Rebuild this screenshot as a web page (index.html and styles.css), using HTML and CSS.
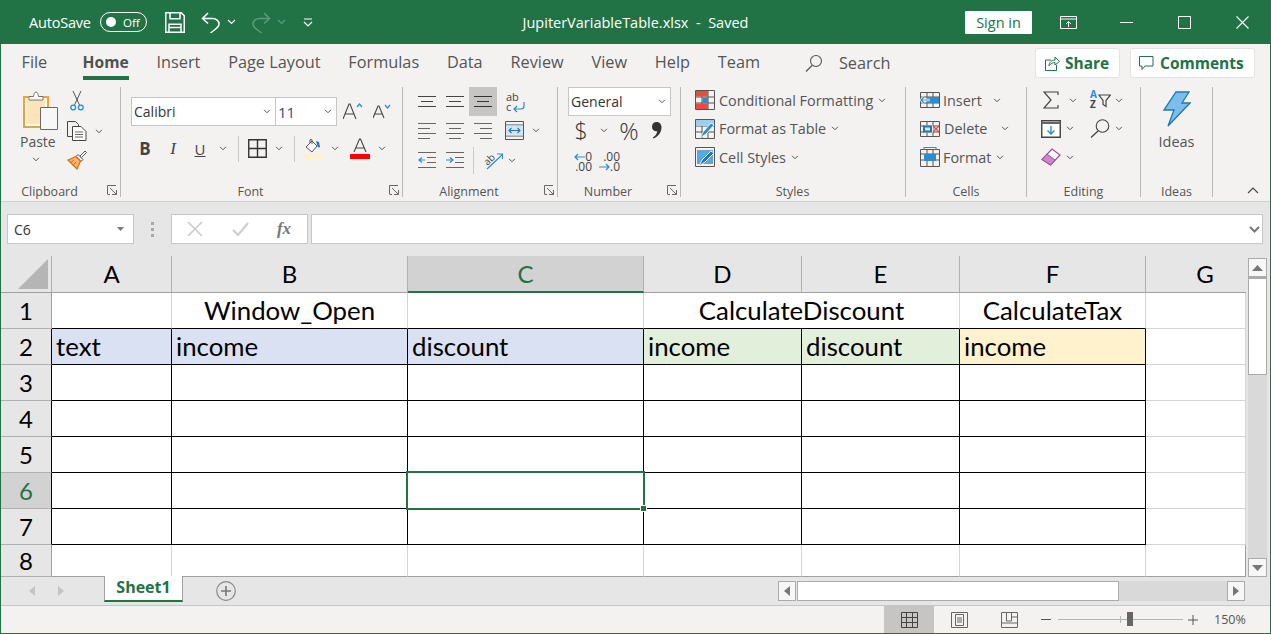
FILE: index.html
```html
<!DOCTYPE html>
<html lang="en">
<head>
<meta charset="utf-8">
<title>JupiterVariableTable.xlsx - Saved</title>
<link rel="stylesheet" href="styles.css">
</head>
<body>
<svg class="defs" width="0" height="0">
  <symbol id="chev" viewBox="0 0 9 6"><path d="M1 1l3.500 3.500L8 1" fill="none" stroke="currentColor" stroke-width="1.200"/></symbol>
  <symbol id="launch" viewBox="0 0 10 10"><path d="M.5 9V.5H9M3 3l6 6M9.500 5v4.500H5M.5 9.500H3" fill="none" stroke="#666" stroke-width="1"/></symbol>
</svg>
<div class="window">
  <header class="titlebar">
    <div class="qat">
      <span class="autosave">AutoSave</span>
      <span class="toggle"><i class="knob"></i><span>Off</span></span>
      <svg class="q-save" width="20" height="21" viewBox="0 0 20 21"><path d="M.75.75h15.500l3 3v16.500H.75zM5 .75v6h10v-6M4 20.250v-8h12v8M4 15.500h12" fill="none" stroke="#fff" stroke-width="1.500"/></svg>
      <svg class="q-undo" width="20" height="21" viewBox="0 0 20 21"><path d="M7 1L1.500 6.500 7 11.500M2 6.500h9.500c3.800 0 6.500 2.500 6.500 5.500 0 2.500-2 4-4 5.500L9.500 21" fill="none" stroke="#fff" stroke-width="1.500"/></svg>
      <svg class="q-chev" width="9" height="6"><use href="#chev"/></svg>
      <svg class="q-redo" width="20" height="21" viewBox="0 0 20 21"><path d="M13 1l5.500 5.500L13 11.500M18 6.500H8.500C4.700 6.500 2 9 2 12c0 2.500 2 4 4 5.500l4.500 3.500" fill="none" stroke="#5e9b7e" stroke-width="1.500"/></svg>
      <svg class="q-chev dim" width="9" height="6"><use href="#chev"/></svg>
      <svg class="q-custom" width="10" height="9" viewBox="0 0 10 9"><path d="M1 1h8M1 4l4 4 4-4" fill="none" stroke="#fff" stroke-width="1.200"/></svg>
    </div>
    <div class="doc-title">JupiterVariableTable.xlsx&nbsp; -&nbsp; Saved</div>
    <div class="win-right">
      <span class="signin">Sign in</span>
      <span class="wc"><svg width="17" height="13" viewBox="0 0 17 13"><path d="M.5.500h16v12H.5zM.5 3h16M8.500 11V5.500M6 8l2.500-2.500L11 8" fill="none" stroke="#fff"/></svg></span>
      <span class="wc"><svg width="13" height="1" viewBox="0 0 13 1"><path d="M0 .5h13" stroke="#fff"/></svg></span>
      <span class="wc"><svg width="13" height="13" viewBox="0 0 13 13"><path d="M.5.500h12v12H.5z" fill="none" stroke="#fff"/></svg></span>
      <span class="wc"><svg width="13" height="13" viewBox="0 0 13 13"><path d="M.5.500l12 12M12.500.5l-12 12" fill="none" stroke="#fff" stroke-width="1.100"/></svg></span>
    </div>
  </header>

  <nav class="tabs">
    <span class="tab file">File</span>
    <span class="tab active">Home</span>
    <span class="tab">Insert</span>
    <span class="tab">Page Layout</span>
    <span class="tab">Formulas</span>
    <span class="tab">Data</span>
    <span class="tab">Review</span>
    <span class="tab">View</span>
    <span class="tab">Help</span>
    <span class="tab">Team</span>
    <span class="search">
      <svg width="18" height="18" viewBox="0 0 18 18"><circle cx="11" cy="7" r="5.500" fill="none" stroke="#555" stroke-width="1.100"/><path d="M7 11.500L1 17.500" stroke="#555" stroke-width="1.300"/></svg>
      <span>Search</span>
    </span>
    <span class="tab-actions">
      <span class="pill share">
        <svg width="15" height="16" viewBox="0 0 15 16"><path d="M6 5H.5v10.500h11V10M4 11c0-4 3-6 6-6V2l4.500 4.500L10 10V7.500C8 7.500 5.500 8.500 4 11z" fill="none" stroke="#217346"/></svg>
        <span>Share</span>
      </span>
      <span class="pill comments">
        <svg width="15" height="15" viewBox="0 0 15 15"><path d="M.5.500h13.500v9.500H6L3 13.500V10H.5z" fill="none" stroke="#217346"/></svg>
        <span>Comments</span>
      </span>
    </span>
  </nav>

  <section class="ribbon">
    <div class="group g-clip launcher-pad">
      <div class="gbody clip-body">
        <div class="paste">
          <svg width="35" height="39" viewBox="0 0 35 39"><path d="M1 6h24v30H1z" fill="#fff" stroke="#eca33e" stroke-width="2"/><path d="M3.500 8h19v25h-19z" fill="#fce4b8"/><path d="M6 9V5.500h4.500C11 3 11.500 1 13 1s2 2 2.500 4.500H20V9z" fill="#fff" stroke="#777"/><path d="M17.500 16.500h17v22h-17z" fill="#f7f7f7" stroke="#6a6a6a"/></svg>
          <span class="paste-label">Paste</span>
          <svg class="ch" width="8" height="5"><use href="#chev"/></svg>
        </div>
        <div class="clip-tools">
          <div class="clip-row"><svg class="cut" width="14" height="20" viewBox="0 0 14 20"><path d="M3 0l6.500 14M11 0L4.500 14" fill="none" stroke="#555"/><circle cx="3.200" cy="16.500" r="2.400" fill="none" stroke="#2a8dd4" stroke-width="1.300"/><circle cx="10.800" cy="16.500" r="2.400" fill="none" stroke="#2a8dd4" stroke-width="1.300"/></svg></div>
          <div class="clip-row"><svg width="20" height="20" viewBox="0 0 20 20"><path d="M.5.500h8l3 3V5M.5.500v15H5" fill="none" stroke="#444"/><path d="M5.500 5.500h8.500l5 5v9H5.500z" fill="#fff" stroke="#444"/><path d="M8 11h8M8 13.500h8M8 16h8" stroke="#666"/></svg><svg class="ch copy-ch" width="8" height="5"><use href="#chev"/></svg></div>
          <div class="clip-row"><svg width="20" height="20" viewBox="0 0 20 20"><path d="M13 6l5-5 1.500 1.500-5 5z" fill="#fff" stroke="#555"/><path d="M11 4.500l5 5-2 2-5-5z" fill="#fff" stroke="#555"/><path d="M1 10l8-3.500 4.500 4.500L10 19z" fill="#f7b46c" stroke="#e06c14" stroke-width="1.300"/><path d="M4 12l3-2M6 15l3-3" stroke="#e06c14"/></svg></div>
        </div>
      </div>
      <div class="glabel">Clipboard</div>
      <svg class="launcher" width="10" height="10"><use href="#launch"/></svg>
    </div>

    <div class="group g-font launcher-pad">
      <div class="gbody">
        <div class="font-row1">
          <span class="select font-name"><span>Calibri</span><svg class="ch" width="8" height="5"><use href="#chev"/></svg></span>
          <span class="select font-size"><span>11</span><svg class="ch" width="8" height="5"><use href="#chev"/></svg></span>
          <svg width="20" height="17" viewBox="0 0 20 17"><path d="M0 16L6 1h1l6 15M2.500 11h8" fill="none" stroke="#444" stroke-width="1.100"/><path d="M14 4l2.500-3L19 4" fill="none" stroke="#2a8dd4" stroke-width="1.200"/></svg>
          <svg width="18" height="15" viewBox="0 0 18 15"><path d="M0 14L5 2h1l5 12M2 10h7" fill="none" stroke="#444" stroke-width="1.100"/><path d="M12 1l2.500 3L17 1" fill="none" stroke="#2a8dd4" stroke-width="1.200"/></svg>
        </div>
        <div class="font-row2">
          <span class="bold-b">B</span>
          <span class="italic-i">I</span>
          <span class="under-u">U</span>
          <svg class="ch" width="8" height="5"><use href="#chev"/></svg>
          <i class="vsep"></i>
          <svg width="19" height="19" viewBox="0 0 19 19"><path d="M.75.750h17.500v17.500H.75zM9.500 1v17M1 9.500h17" fill="none" stroke="#333" stroke-width="1.400"/></svg>
          <svg class="ch" width="8" height="5"><use href="#chev"/></svg>
          <i class="vsep"></i>
          <svg width="20" height="21" viewBox="0 0 20 21"><path d="M3 9l6-6 5 5-5 6z" fill="#fff" stroke="#555"/><path d="M7 5V2c0-1 2-1 2 0v4" fill="none" stroke="#555"/><path d="M13 3l3 1 1 5c-1 1-3 0-2.500-1z" fill="#1f78b4"/><path d="M0 16h20v5H0z" fill="#fff0cf"/></svg>
          <svg class="ch" width="8" height="5"><use href="#chev"/></svg>
          <svg width="20" height="21" viewBox="0 0 20 21"><path d="M4 14L9.500 1h1L16 14M6 10h8" fill="none" stroke="#444" stroke-width="1.100"/><path d="M0 16h20v5H0z" fill="#f00"/></svg>
          <svg class="ch" width="8" height="5"><use href="#chev"/></svg>
        </div>
      </div>
      <div class="glabel">Font</div>
      <svg class="launcher" width="10" height="10"><use href="#launch"/></svg>
    </div>

    <div class="group g-align launcher-pad">
      <div class="gbody">
        <div class="al-row r1">
          <svg width="18" height="12" viewBox="0 0 18 12"><path d="M0 .5h18M3 5.500h12M0 10.500h18" stroke="#444"/></svg>
          <svg width="18" height="12" viewBox="0 0 18 12"><path d="M0 .5h18M3 5.500h12M0 10.500h18" stroke="#444"/></svg>
          <span class="al-on"><svg width="18" height="12" viewBox="0 0 18 12"><path d="M0 .5h18M3 5.500h12M0 10.500h18" stroke="#333"/></svg></span>
          <svg class="wrap-ic" width="20" height="26" viewBox="0 0 20 26"><text x="1" y="12" class="svgt">ab</text><text x="1" y="22" class="svgt">c</text><path d="M19 13v4c0 2-1 3-3 3H9M12 17l-3 3 3 3" fill="none" stroke="#2a8dd4" stroke-width="1.200"/></svg>
        </div>
        <div class="al-row r2">
          <svg width="18" height="18" viewBox="0 0 18 18"><path d="M0 1.500h18M0 6.500h12M0 11.500h18M0 16.500h12" stroke="#666"/></svg>
          <svg width="18" height="18" viewBox="0 0 18 18"><path d="M0 1.500h18M3 6.500h12M0 11.500h18M3 16.500h12" stroke="#666"/></svg>
          <svg width="18" height="18" viewBox="0 0 18 18"><path d="M0 1.500h18M6 6.500h12M0 11.500h18M6 16.500h12" stroke="#666"/></svg>
          <svg width="19" height="19" viewBox="0 0 19 19"><path d="M.5.500h18v18H.5zM1 4h17M1 15h17" fill="none" stroke="#555"/><path d="M1 4.500h17v10H1z" fill="#cfe6f7"/><path d="M4 9.500h11M6.500 7L4 9.500 6.500 12M12.500 7l2.500 2.500-2.500 2.500" fill="none" stroke="#1f78b4" stroke-width="1.100"/></svg>
          <svg class="ch" width="8" height="5"><use href="#chev"/></svg>
        </div>
        <div class="al-row r3">
          <svg width="18" height="18" viewBox="0 0 18 18"><path d="M0 1.500h18M9 6.500h9M9 11.500h9M0 16.500h18" stroke="#666"/><path d="M7 9H1M4 6.500L1 9l3 2.500" fill="none" stroke="#2a8dd4" stroke-width="1.200"/></svg>
          <svg width="18" height="18" viewBox="0 0 18 18"><path d="M0 1.500h18M9 6.500h9M9 11.500h9M0 16.500h18" stroke="#666"/><path d="M0 9h6M4 6.500L7 9l-3 2.500" fill="none" stroke="#2a8dd4" stroke-width="1.200"/></svg>
          <i class="vsep tall"></i>
          <svg width="22" height="22" viewBox="0 0 22 22"><text x="2" y="14" class="svgs" transform="rotate(-45 8 10)">ab</text><path d="M6 20L21 6M16 5h5.500v5" fill="none" stroke="#2a8dd4" stroke-width="1.200"/></svg>
          <svg class="ch" width="8" height="5"><use href="#chev"/></svg>
        </div>
      </div>
      <div class="glabel">Alignment</div>
      <svg class="launcher" width="10" height="10"><use href="#launch"/></svg>
    </div>

    <div class="group g-num launcher-pad">
      <div class="gbody">
        <div class="num-select-row"><span class="select num-select"><span>General</span><svg class="ch" width="8" height="5"><use href="#chev"/></svg></span></div>
        <div class="num-row2">
          <span class="glyph-big">$</span>
          <svg class="ch" width="8" height="5"><use href="#chev"/></svg>
          <span class="glyph-big pct">%</span>
          <svg width="10" height="17" viewBox="0 0 10 17"><path d="M4.500 0C7.500 0 9.500 2.200 9.500 5.500c0 5-3.500 9-8 11l-.7-1c2.500-1.500 4-3.500 4.400-6.300C2.500 9.800 0 8 0 4.800 0 2 2 0 4.500 0z" fill="#333"/></svg>
        </div>
        <div class="num-row3">
          <span class="dec"><span class="dec1"><svg width="11" height="8" viewBox="0 0 11 8"><path d="M11 4H1M4 1L1 4l3 3" fill="none" stroke="#2a8dd4" stroke-width="1.200"/></svg>0</span><span>.00</span></span>
          <span class="dec"><span>.00</span><span class="dec1"><svg width="11" height="8" viewBox="0 0 11 8"><path d="M0 4h10M7 1l3 3-3 3" fill="none" stroke="#2a8dd4" stroke-width="1.200"/></svg>.0</span></span>
        </div>
      </div>
      <div class="glabel">Number</div>
      <svg class="launcher" width="10" height="10"><use href="#launch"/></svg>
    </div>

    <div class="group g-styles">
      <div class="gbody list-body">
        <div class="list-row"><svg width="20" height="20" viewBox="0 0 20 20"><path d="M.5.500h19v19H.5zM.5 7h19M.5 13h19M7 .5v19M13 .5v19" fill="none" stroke="#555"/><path d="M1 1h12v5.500H1zM1 13.500h12V19H1z" fill="#e84c3d"/><path d="M7.500 7.500H13V13H7.500z" fill="#2a8dd4"/></svg><span>Conditional Formatting</span><svg class="ch" width="8" height="5"><use href="#chev"/></svg></div>
        <div class="list-row"><svg width="20" height="20" viewBox="0 0 20 20"><path d="M.5.500h19v19H.5zM.5 7h19M.5 13h19M7 .5v19M13 .5v19" fill="none" stroke="#555"/><path d="M1 1h18v6H1z" fill="#9fcdee"/><path d="M5 19l3-6 8-9 3 2-8 9z" fill="#2a8dd4" stroke="#f3f2f1"/></svg><span>Format as Table</span><svg class="ch" width="8" height="5"><use href="#chev"/></svg></div>
        <div class="list-row"><svg width="20" height="20" viewBox="0 0 20 20"><path d="M.5.500h19v19H.5z" fill="none" stroke="#555"/><path d="M2 3h16v14H2z" fill="#5aa7e0"/><path d="M4 19l3-6 9-9 3 2-9 9z" fill="#1f78b4" stroke="#f3f2f1"/></svg><span>Cell Styles</span><svg class="ch" width="8" height="5"><use href="#chev"/></svg></div>
      </div>
      <div class="glabel">Styles</div>
    </div>

    <div class="group g-cells">
      <div class="gbody list-body">
        <div class="list-row"><svg width="20" height="20" viewBox="0 0 20 20"><path d="M.5 2.500h19v15H.5zM7 2.500v15M13 2.500v15M.5 7h19M.5 13h19" fill="none" stroke="#555"/><path d="M7 7h12v6H7z" fill="#2a8dd4"/><path d="M10 10H1M4 7l-3 3 3 3" fill="none" stroke="#fff" stroke-width="2.500"/><path d="M11 10H1M4 7l-3 3 3 3" fill="none" stroke="#2a8dd4" stroke-width="1.200"/></svg><span>Insert</span><svg class="ch ins" width="8" height="5"><use href="#chev"/></svg></div>
        <div class="list-row"><svg width="20" height="20" viewBox="0 0 20 20"><path d="M.5 2.500h19v15H.5zM7 2.500v15M13 2.500v15M.5 7h19M.5 13h19" fill="none" stroke="#555"/><path d="M4 6.500h9v7H4z" fill="#f3f2f1"/><path d="M4 7.500h7v5H4z" fill="#cfe6f7" stroke="#1f78b4" stroke-width="2"/><path d="M13 7l6 6M19 7l-6 6" stroke="#e84c3d" stroke-width="1.400"/></svg><span class="del">Delete</span><svg class="ch del-ch" width="8" height="5"><use href="#chev"/></svg></div>
        <div class="list-row"><svg width="20" height="20" viewBox="0 0 20 20"><path d="M.5 2.500h19v17H.5zM7 2.500v17M13 2.500v17M.5 7h19M.5 13h19" fill="none" stroke="#555"/><path d="M4 7h12v7H4z" fill="#2a8dd4"/><path d="M4 .5h12M4 0v3M16 0v3" fill="none" stroke="#2a8dd4"/></svg><span>Format</span><svg class="ch" width="8" height="5"><use href="#chev"/></svg></div>
      </div>
      <div class="glabel">Cells</div>
    </div>

    <div class="group g-edit">
      <div class="gbody list-body">
        <div class="ed-row e1">
          <svg width="16" height="18" viewBox="0 0 16 18"><path d="M15 4V1H1l7 8-7 8h14v-3" fill="none" stroke="#444" stroke-width="1.200"/></svg>
          <svg class="ch" width="8" height="5"><use href="#chev"/></svg>
          <svg width="21" height="26" viewBox="0 0 21 26"><text x="0" y="11" class="svgaz">A</text><text x="0" y="21" class="svgz">Z</text><path d="M9 8h11.500l-4.500 5.500v6l-3-2v-4z" fill="none" stroke="#444" stroke-width="1.200"/></svg>
          <svg class="ch" width="8" height="5"><use href="#chev"/></svg>
        </div>
        <div class="ed-row e2">
          <svg width="20" height="18" viewBox="0 0 20 18"><path d="M.75.750h18.500v16.500H.75z" fill="#fff" stroke="#444" stroke-width="1.400"/><path d="M1 2h18v2H1z" fill="#666"/><path d="M10 6v8M6.500 10.500L10 14l3.500-3.500" fill="none" stroke="#2a8dd4" stroke-width="1.400"/></svg>
          <svg class="ch" width="8" height="5"><use href="#chev"/></svg>
          <svg class="srch" width="20" height="19" viewBox="0 0 20 19"><circle cx="12.500" cy="7" r="6.300" fill="none" stroke="#444" stroke-width="1.100"/><path d="M8 12L1 18.500" stroke="#444" stroke-width="1.300"/></svg>
          <svg class="ch" width="8" height="5"><use href="#chev"/></svg>
        </div>
        <div class="ed-row e3">
          <svg width="20" height="18" viewBox="0 0 20 18"><path d="M1 11.500L11 1l8 6-9.500 10z" fill="#fff" stroke="#a349a4" stroke-width="1.200"/><path d="M1 11.500L6 6l8 6-4.500 5z" fill="#c888cc" stroke="#a349a4"/></svg>
          <svg class="ch" width="8" height="5"><use href="#chev"/></svg>
        </div>
      </div>
      <div class="glabel">Editing</div>
    </div>

    <div class="group g-ideas">
      <div class="gbody ideas-body">
        <svg width="28" height="36" viewBox="0 0 28 36"><path d="M13 1h13l-7 11h8L5 35l6-16H1z" fill="#7cbdeb" stroke="#1f78b4" stroke-width="1.300"/></svg>
        <span>Ideas</span>
      </div>
      <div class="glabel">Ideas</div>
    </div>

    <div class="collapse"><svg width="12" height="7" viewBox="0 0 12 7"><path d="M1 6l5-5 5 5" fill="none" stroke="#444" stroke-width="1.100"/></svg></div>
  </section>

  <section class="formula">
    <div class="namebox"><span>C6</span><svg width="8" height="4" viewBox="0 0 8 4"><path d="M0 0h7L3.500 4z" fill="#777"/></svg></div>
    <div class="dots"><i></i><i></i><i></i></div>
    <div class="fx-box">
      <svg width="16" height="14" viewBox="0 0 16 14"><path d="M1 0l14 14M15 0L1 14" stroke="#ccc" stroke-width="1.600"/></svg>
      <svg width="17" height="14" viewBox="0 0 17 14"><path d="M1 8l5 5L16 1" fill="none" stroke="#ccc" stroke-width="2"/></svg>
      <span class="fx">fx</span>
    </div>
    <div class="finput"><svg width="11" height="7" viewBox="0 0 11 7"><path d="M1 1l4.500 4.500L10 1" fill="none" stroke="#777" stroke-width="2"/></svg></div>
  </section>

  <section class="sheet-area">
    <div class="sheet">
      <div class="corner"><svg width="30" height="30" viewBox="0 0 30 30"><path d="M30 0v30H0z" fill="#b5b5b5"/></svg></div>
      <div class="ch-cell">A</div><div class="ch-cell">B</div><div class="ch-cell ch-sel">C</div><div class="ch-cell">D</div><div class="ch-cell">E</div><div class="ch-cell">F</div><div class="ch-cell ch-last">G</div>

      <div class="rh-cell">1</div>
      <div class="c bb"></div><div class="c bb ctr">Window_Open</div><div class="c bb"></div><div class="c bb ctr span2">CalculateDiscount</div><div class="c bb ctr">CalculateTax</div><div class="c"></div>

      <div class="rh-cell rb">2</div>
      <div class="c k blue">text</div><div class="c k blue">income</div><div class="c k blue">discount</div><div class="c k green">income</div><div class="c k green">discount</div><div class="c k yellow">income</div><div class="c"></div>

      <div class="rh-cell rb">3</div>
      <div class="c k"></div><div class="c k"></div><div class="c k"></div><div class="c k"></div><div class="c k"></div><div class="c k"></div><div class="c"></div>

      <div class="rh-cell rb">4</div>
      <div class="c k"></div><div class="c k"></div><div class="c k"></div><div class="c k"></div><div class="c k"></div><div class="c k"></div><div class="c"></div>

      <div class="rh-cell rb">5</div>
      <div class="c k"></div><div class="c k"></div><div class="c k"></div><div class="c k"></div><div class="c k"></div><div class="c k"></div><div class="c"></div>

      <div class="rh-cell rb rh-sel">6</div>
      <div class="c k"></div><div class="c k"></div><div class="c k cur"><div class="selbox"><i class="handle"></i></div></div><div class="c k"></div><div class="c k"></div><div class="c k"></div><div class="c"></div>

      <div class="rh-cell rb">7</div>
      <div class="c k"></div><div class="c k"></div><div class="c k"></div><div class="c k"></div><div class="c k"></div><div class="c k"></div><div class="c"></div>

      <div class="rh-cell">8</div>
      <div class="c end"></div><div class="c end"></div><div class="c end"></div><div class="c end"></div><div class="c end"></div><div class="c end"></div><div class="c end"></div>
    </div>
    <aside class="vscroll">
      <span class="sbtn"><svg width="11" height="6" viewBox="0 0 11 6"><path d="M5.500 0L11 6H0z" fill="#777"/></svg></span>
      <span class="vthumb"></span>
      <span class="vtrack"></span>
      <span class="sbtn"><svg width="11" height="6" viewBox="0 0 11 6"><path d="M0 0h11L5.500 6z" fill="#777"/></svg></span>
    </aside>
  </section>

  <section class="sheetbar">
    <div class="nav-arrows">
      <svg width="6" height="10" viewBox="0 0 6 10"><path d="M6 0v10L0 5z" fill="#c4c4c4"/></svg>
      <svg width="6" height="10" viewBox="0 0 6 10"><path d="M0 0v10l6-5z" fill="#c4c4c4"/></svg>
    </div>
    <div class="sheet-tab">Sheet1</div>
    <svg class="add" width="20" height="20" viewBox="0 0 20 20"><circle cx="10" cy="10" r="9.300" fill="none" stroke="#888" stroke-width="1.200"/><path d="M10 5v10M5 10h10" stroke="#777" stroke-width="1.600"/></svg>
    <div class="hscroll">
      <span class="hbtn"><svg width="6" height="10" viewBox="0 0 6 10"><path d="M6 0v10L0 5z" fill="#777"/></svg></span>
      <span class="hthumb"></span>
      <span class="htrack"></span>
      <span class="hbtn"><svg width="6" height="10" viewBox="0 0 6 10"><path d="M0 0v10l6-5z" fill="#777"/></svg></span>
    </div>
  </section>

  <footer class="status">
    <span class="view on"><svg width="17" height="16" viewBox="0 0 17 16"><path d="M.5.500h16v15H.5zM.5 5.500h16M.5 10.500h16M5.500.5v15M11.500.5v15" fill="none" stroke="#444"/></svg></span>
    <span class="view"><svg width="17" height="16" viewBox="0 0 17 16"><path d="M.5.500h16v15H.5z" fill="none" stroke="#666"/><path d="M4.500 2.500h8v11h-8zM6 6h5M6 8h5M6 10h5" fill="none" stroke="#666"/></svg></span>
    <span class="view"><svg width="17" height="16" viewBox="0 0 17 16"><path d="M.5.500h16v15H.5zM5.500.5V9h5V.5M10.500 5h6" fill="none" stroke="#666"/><path d="M.5 11h16" stroke="#666"/></svg></span>
    <span class="zoom">
      <svg width="10" height="1" viewBox="0 0 10 1"><path d="M0 .5h10" stroke="#555"/></svg>
      <span class="slider"><i class="tick"></i><i class="sthumb"></i></span>
      <svg width="10" height="10" viewBox="0 0 10 10"><path d="M0 5h10M5 0v10" stroke="#555"/></svg>
      <span class="zoom-val">150%</span>
    </span>
  </footer>
</div>
</body>
</html>
```
FILE: styles.css
```css
* { box-sizing: border-box; }
html, body { margin: 0; padding: 0; }
body { font-family: "Open Sans", "Noto Sans", sans-serif; color: #444; background: #f3f2f1; }
svg { display: block; flex: none; }
i { display: block; }
.defs { position: absolute; }
.window { width: 1271px; height: 634px; overflow: hidden; border: 1px solid #217346; border-top: 0; display: flex; flex-direction: column; background: #f3f2f1; }

/* title bar */
.titlebar { height: 44px; margin: 0 -1px; background: #217346; color: #fff; display: grid; grid-template-columns: 1fr auto 1fr; align-items: center; flex: none; }
.qat { display: flex; align-items: center; padding-left: 29px; }
.autosave { font-size: 14.500px; width: 71px; letter-spacing: -.2px; }
.toggle { width: 47px; height: 20px; border: 1px solid #fff; border-radius: 10px; display: flex; align-items: center; padding-left: 5px; font-size: 11.500px; }
.knob { width: 10px; height: 10px; background: #fff; border-radius: 50%; margin-right: 7px; }
.q-save { margin-left: 18px; }
.q-undo { margin-left: 16px; }
.q-chev { margin-left: 6px; color: #fff; }
.q-chev.dim { color: #5e9b7e; }
.q-redo { margin-left: 15px; }
.q-custom { margin-left: 17px; }
.doc-title { font-size: 14.500px; white-space: nowrap; }
.win-right { display: flex; justify-content: flex-end; align-items: center; }
.signin { width: 67px; height: 23px; background: #fff; color: #217346; border-radius: 1px; font-size: 14.500px; display: flex; align-items: center; justify-content: center; margin-right: 7px; }
.wc { width: 58px; height: 44px; display: flex; align-items: center; justify-content: center; }

/* tabs */
.tabs { height: 38px; flex: none; display: flex; align-items: flex-start; gap: 27.800px; padding: 0 15px 0 20.500px; font-size: 16.300px; color: #555; }
.tab { position: relative; height: 38px; line-height: 37px; white-space: nowrap; }
.tab.file { margin-right: 7.500px; }
.tab.active { font-weight: 700; color: #505050; font-size: 15.600px; }
.tab.active::after { content: ""; position: absolute; left: 0; right: 0; bottom: 2px; height: 4px; background: #217346; }
.search { display: flex; align-items: center; gap: 16px; margin-left: 17px; height: 37px; }
.tab-actions { margin-left: auto; display: flex; gap: 10px; padding-top: 4px; }
.pill { height: 30px; background: #fff; border: 1px solid #e3e3e3; border-radius: 3px; display: flex; align-items: center; color: #217346; font-weight: 700; font-size: 15.500px; }
.share { width: 85px; padding-left: 9px; gap: 5px; }
.comments { width: 125px; padding-left: 8px; gap: 6px; }

/* ribbon */
.ribbon { height: 120px; flex: none; padding-top: 5px; display: flex; border-bottom: 1px solid #d0d0d0; font-size: 14px; }
.group { position: relative; height: 110px; border-right: 1px solid #b9b9b9; display: flex; flex-direction: column; flex: none; }
.gbody { height: 98px; flex: none; }
.glabel { font-size: 12.500px; text-align: center; line-height: 13px; color: #555; white-space: nowrap; }
.launcher-pad .glabel { padding-right: 22px; }
.launcher { position: absolute; right: 3px; bottom: 2px; }
.ch { color: #555; }
.g-clip { width: 120px; }
.g-font { width: 282px; padding-left: 10px; }
.g-align { width: 155px; padding-left: 10px; }
.g-num { width: 123px; padding-left: 10px; }
.g-font .glabel, .g-align .glabel, .g-num .glabel { padding-right: 32px; }
.g-styles { width: 225px; padding-left: 14px; }
.g-styles .glabel { padding-right: 15px; }
.g-cells { width: 121px; padding-left: 14px; }
.g-cells .glabel { padding-right: 14px; }
.g-edit { width: 114px; }
.g-ideas { width: 72px; }
.collapse { flex: 1; display: flex; justify-content: flex-end; align-items: flex-end; padding: 0 11px 7px 0; }

.clip-body { display: flex; }
.paste { width: 63px; padding: 4px 0 0 22px; display: flex; flex-direction: column; }
.paste-label { font-size: 14px; line-height: 22px; margin: 1px 0 0 -3px; color: #555; }
.paste .ch { margin: 4px 0 0 9px; }
.clip-tools { width: 56px; margin-top: -1px; }
.clip-row { height: 30px; display: flex; align-items: center; padding-left: 3px; }
.clip-row:last-child { height: 28px; }
.clip-row .cut { margin-left: 3px; }
.copy-ch { margin-left: 8px; }

.select { background: #fff; border: 1px solid #c6c6c6; display: flex; align-items: center; justify-content: space-between; color: #333; }
.font-row1 { height: 39px; padding-top: 10px; display: flex; align-items: center; }
.font-name { width: 144px; height: 29px; padding: 0 4px 0 2px; font-size: 14px; border-right: 0; }
.font-size { width: 62px; height: 29px; padding: 0 4px 0 2px; font-size: 15px; color: #2b4d85; }
.font-row1 > svg:nth-of-type(1) { margin-left: 6px; }
.font-row1 > svg:nth-of-type(2) { margin-left: 10px; }
.font-row2 { height: 42px; padding-top: 3px; display: grid; grid-template-columns: 28px 28px 26px 20px 10px 28px 16px 14px 24px 20px 30px 14px; place-items: center; }
.bold-b { font-weight: 700; font-size: 17px; color: #444; }
.italic-i { font-style: italic; font-size: 17px; font-family: "Liberation Serif", serif; color: #444; }
.under-u { font-size: 15px; text-decoration: underline; color: #444; }
.vsep { width: 1px; height: 26px; background: #c9c9c9; }
.vsep.tall { height: 27px; }

.al-row { display: grid; place-items: center; height: 29px; }
.al-row.r1 { grid-template-columns: 28px 28px 28px 36px; }
.al-row.r2 { grid-template-columns: 28px 28px 28px 34px 10px; }
.al-row.r3 { height: 30px; grid-template-columns: 28px 28px 8px 30px 10px; }
.al-on { width: 28px; height: 29px; background: #c6c5c3; display: flex; align-items: center; justify-content: center; }
.svgt { font: 11px "Open Sans", sans-serif; fill: #444; }
.svgs { font: 10px "Open Sans", sans-serif; fill: #444; }
.svgaz { font: bold 10px "Open Sans", sans-serif; fill: #2a8dd4; }
.svgz { font: bold 10px "Open Sans", sans-serif; fill: #444; }

.num-select-row { height: 29px; }
.num-select { width: 103px; height: 29px; padding: 0 4px 0 2px; font-size: 14px; }
.num-row2 { height: 29px; display: grid; grid-template-columns: 26px 20px 30px 26px; place-items: center; }
.glyph-big { font-size: 23px; font-weight: 300; color: #333; line-height: 29px; }
.pct { font-size: 24px; }
.num-row3 { height: 30px; padding-left: 4px; display: flex; gap: 8px; }
.dec { width: 20px; font-size: 12px; line-height: 10px; padding-top: 7px; display: flex; flex-direction: column; align-items: flex-end; color: #444; }
.dec1 { display: flex; align-items: center; }

.list-body { margin-top: -1px; height: 99px; }
.list-row { height: 28.500px; display: flex; align-items: center; white-space: nowrap; color: #555; font-size: 14.400px; }
.list-row > svg:first-child { margin-right: 4px; }
.g-cells .list-row > svg:first-child { margin-right: 3px; }
.list-row .ch { margin-left: 5px; }
.list-row .ins { margin-left: 11px; }
.list-row .del { margin-left: 1px; }
.list-row .del-ch { margin-left: 14px; }

.ed-row { height: 28.500px; display: grid; place-items: center; padding-left: 14px; justify-content: start; }
.ed-row.e1 { grid-template-columns: 20px 24px 30px 8px; }
.ed-row.e2 { grid-template-columns: 20px 18px 36px 8px; }
.ed-row.e3 { grid-template-columns: 20px 18px; }
.srch { margin-left: 6px; }

.ideas-body { display: flex; flex-direction: column; align-items: center; padding-top: 4px; font-size: 14.500px; color: #555; }
.ideas-body span { margin-top: 5px; }

/* formula bar */
.formula { height: 54px; flex: none; background: #e6e6e6; display: flex; align-items: flex-start; padding: 12px 7px 0 6px; }
.namebox { width: 127px; height: 30px; background: #fff; border: 1px solid #c6c6c6; display: flex; align-items: center; justify-content: space-between; padding: 0 8px 0 6px; font-size: 14px; color: #333; }
.dots { width: 37px; height: 30px; display: flex; flex-direction: column; align-items: center; justify-content: center; gap: 3px; }
.dots i { width: 3px; height: 3px; background: #a9a9a9; }
.fx-box { width: 137px; height: 30px; background: #fff; border: 1px solid #c6c6c6; display: grid; grid-template-columns: 46px 44px 44px; place-items: center; }
.fx { font: italic 700 17px "Liberation Serif", serif; color: #777; }
.finput { flex: 1; height: 30px; margin-left: 3px; background: #fff; border: 1px solid #c6c6c6; display: flex; align-items: center; justify-content: flex-end; padding-right: 2px; }

/* sheet */
.sheet-area { height: 321px; flex: none; display: flex; background: #e6e6e6; }
.sheet { width: 1245px; display: grid; grid-template-columns: 51px 120px 236px 236px 158px 158px 186px 100px; grid-template-rows: 37px repeat(7, 36px) 32px; font-family: Lato, "Open Sans", sans-serif; font-size: 24px; color: #000; background: #fff; }
.corner { background: #e6e6e6; border-right: 1px solid #b0b0b0; border-bottom: 1px solid #a0a0a0; display: flex; justify-content: flex-end; align-items: flex-end; padding: 0 3px 3px 0; }
.ch-cell { background: #e6e6e6; border-right: 1px solid #b0b0b0; border-bottom: 1px solid #a0a0a0; display: flex; align-items: center; justify-content: center; padding-bottom: 1px; }
.ch-sel { background: #d2d2d2; color: #217346; border-bottom: 2px solid #217346; }
.ch-last { border-right: 0; padding-left: 18px; }
.rh-cell { background: #e6e6e6; border-right: 1px solid #a0a0a0; border-bottom: 1px solid #b0b0b0; display: flex; align-items: center; justify-content: center; }
.rh-cell.rb { border-right-color: #000; }
.rh-sel { background: #d2d2d2; color: #217346; }
.c { border-right: 1px solid #d4d4d4; border-bottom: 1px solid #d4d4d4; padding-left: 4px; line-height: 34px; white-space: nowrap; font-size: 25.800px; }
.bb { border-bottom-color: #000; }
.ctr { text-align: center; padding-left: 0; }
.span2 { grid-column: span 2; }
.k { border-right-color: #000; border-bottom-color: #000; }
.blue { background: #d9e1f2; }
.green { background: #e2efda; }
.yellow { background: #fff2cc; }
.end { border-bottom-color: #a0a0a0; }
.c:nth-child(8n+8) { border-right-color: #a0a0a0; }
.sheet > .c:last-child { border-right-color: #a0a0a0; }
.cur { position: relative; }
.selbox { position: absolute; left: -2px; top: -2px; right: -2px; bottom: -2px; border: 2px solid #217346; }
.handle { position: absolute; right: -4px; bottom: -4px; width: 7px; height: 7px; background: #217346; border: 1px solid #fff; }

.vscroll { flex: 1; padding: 2px 3px 0 2px; display: flex; flex-direction: column; }
.sbtn { height: 19px; flex: none; background: #f7f7f7; border: 1px solid #ababab; display: flex; align-items: center; justify-content: center; }
.vthumb { height: 98px; flex: none; background: #fff; border: 1px solid #ababab; border-top-width: 2px; }
.vtrack { flex: 1; background: #d9d9d9; }

/* sheet tabs bar */
.sheetbar { height: 29px; flex: none; background: #e6e6e6; border-bottom: 1px solid #c6c6c6; display: flex; align-items: flex-start; }
.nav-arrows { width: 103px; height: 28px; padding-left: 28px; display: flex; align-items: center; gap: 23px; }
.sheet-tab { width: 79px; height: 26px; margin-top: -1px; background: #fff; border: 1px solid #a0a0a0; border-top: 0; border-bottom: 2px solid #217346; color: #217346; font-weight: 700; font-size: 16px; text-align: center; line-height: 22px; }
.add { margin: 4px 0 0 33px; }
.hscroll { margin-left: auto; margin-right: 25px; margin-top: 4px; width: 467px; height: 20px; display: flex; }
.hbtn { width: 18px; flex: none; background: #f7f7f7; border: 1px solid #ababab; display: flex; align-items: center; justify-content: center; }
.hthumb { width: 322px; margin-left: 1px; flex: none; background: #fff; border: 1px solid #ababab; }
.htrack { flex: 1; background: #d9d9d9; }

/* status bar */
.status { flex: 1; display: flex; padding-left: 883px; }
.view { width: 50px; display: flex; align-items: center; justify-content: center; }
.view.on { background: #c6c5c3; }
.zoom { display: flex; align-items: center; margin-left: 7px; }
.slider { position: relative; width: 125px; height: 1px; margin: 0 5px 0 7px; background: #b5b5b5; }
.tick { position: absolute; left: 62px; top: -3px; width: 1px; height: 7px; background: #b5b5b5; }
.sthumb { position: absolute; left: 69px; top: -7px; width: 6px; height: 14px; background: #666; }
.zoom-val { font-size: 12.500px; margin-left: 16px; color: #555; }
```
